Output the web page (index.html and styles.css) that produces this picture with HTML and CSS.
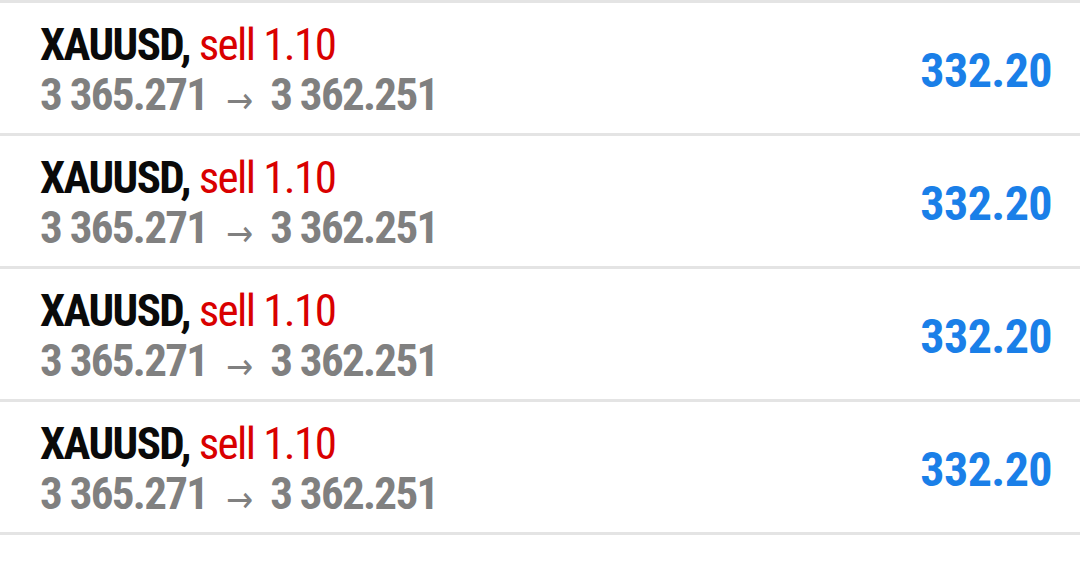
FILE: index.html
```html
<!DOCTYPE html>
<html lang="en">
<head>
    <meta charset="UTF-8">
    <meta name="viewport" content="width=device-width, initial-scale=1.0">
    <title>Trades</title>
    <link rel="stylesheet" href="styles.css">
</head>
<body>
    <div class="trade-list">
        <div class="trade-row">
            <div class="trade-info">
                <div class="trade-title"><span class="symbol">XAUUSD,</span> <span class="side">sell 1.10</span></div>
                <div class="trade-prices">3 365.271 <span class="arrow">&rarr;</span> 3 362.251</div>
            </div>
            <div class="trade-profit">332.20</div>
        </div>
        <div class="trade-row">
            <div class="trade-info">
                <div class="trade-title"><span class="symbol">XAUUSD,</span> <span class="side">sell 1.10</span></div>
                <div class="trade-prices">3 365.271 <span class="arrow">&rarr;</span> 3 362.251</div>
            </div>
            <div class="trade-profit">332.20</div>
        </div>
        <div class="trade-row">
            <div class="trade-info">
                <div class="trade-title"><span class="symbol">XAUUSD,</span> <span class="side">sell 1.10</span></div>
                <div class="trade-prices">3 365.271 <span class="arrow">&rarr;</span> 3 362.251</div>
            </div>
            <div class="trade-profit">332.20</div>
        </div>
        <div class="trade-row">
            <div class="trade-info">
                <div class="trade-title"><span class="symbol">XAUUSD,</span> <span class="side">sell 1.10</span></div>
                <div class="trade-prices">3 365.271 <span class="arrow">&rarr;</span> 3 362.251</div>
            </div>
            <div class="trade-profit">332.20</div>
        </div>
    </div>
</body>
</html>
```

FILE: styles.css
```css
body {
    margin: 0;
    padding: 0;
    background: #ffffff;
    font-family: "Roboto Condensed", "Liberation Sans Narrow", "DejaVu Sans Condensed", sans-serif;
}
.trade-list {
    border-bottom: 3px solid #e4e4e4;
}
.trade-row {
    display: flex;
    align-items: center;
    justify-content: space-between;
    height: 130px;
    padding: 0 28px 0 40px;
    border-top: 3px solid #e4e4e4;
}
.trade-info {
    display: flex;
    flex-direction: column;
    padding-top: 9px;
}
.trade-title {
    font-size: 45px;
    line-height: 50px;
    letter-spacing: -1.6px;
}
.symbol {
    color: #0a0a0a;
    font-weight: bold;
}
.side {
    color: #d90000;
}
.trade-prices {
    font-size: 45px;
    line-height: 50px;
    letter-spacing: -1.7px;
    color: #808080;
    font-weight: bold;
}
.arrow {
    font-weight: normal;
    font-size: 36px;
    vertical-align: -3px;
    margin: 0 10px;
}
.trade-profit {
    padding-top: 4px;
    font-size: 48px;
    font-weight: bold;
    letter-spacing: -0.6px;
    color: #1a7fe8;
}
```
